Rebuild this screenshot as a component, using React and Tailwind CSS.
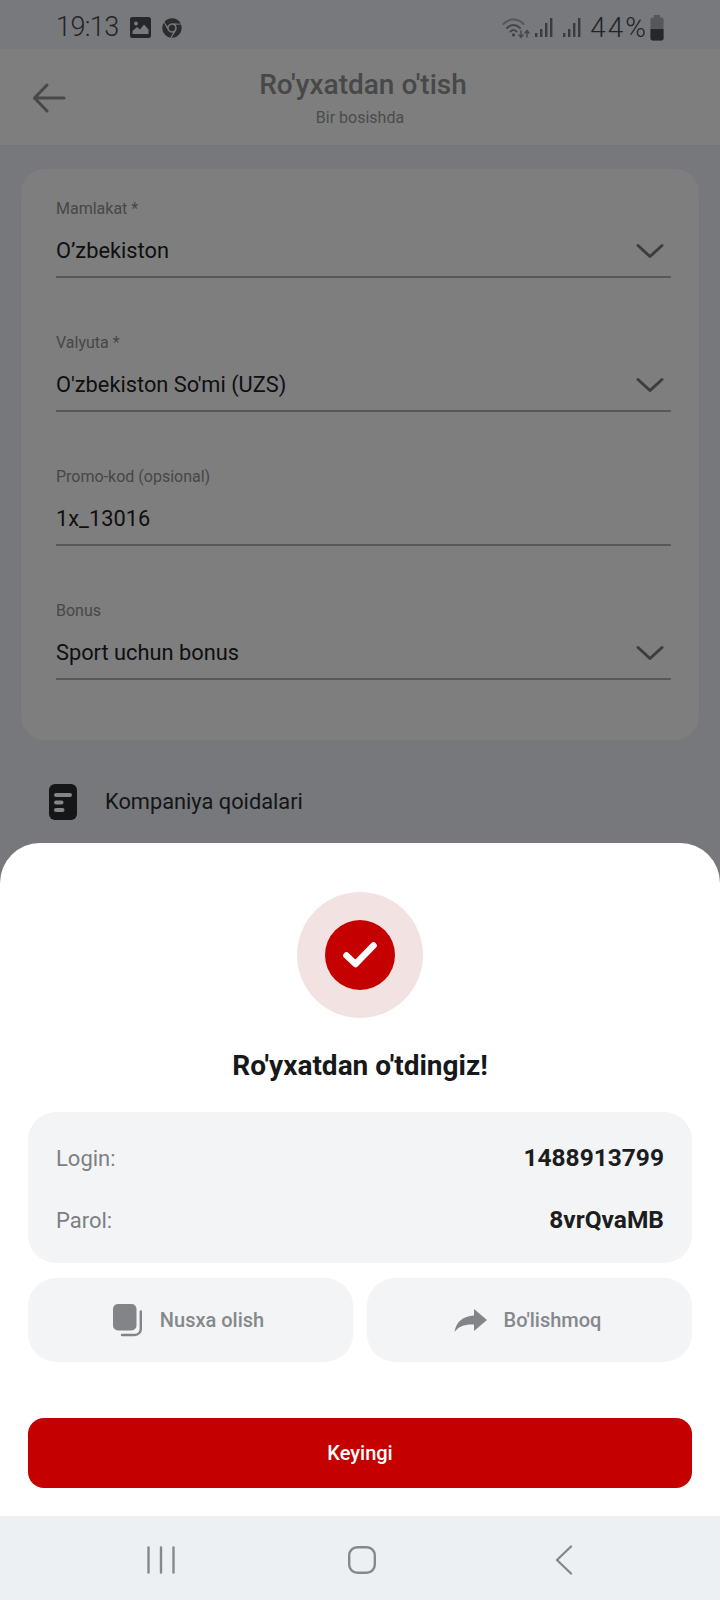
import React from "react";
import { FaChrome } from "react-icons/fa";

function Chevron() {
  return (
    <svg width="28" height="16" viewBox="0 0 28 16" fill="none" stroke="#3d3d3d" strokeWidth="3" strokeLinecap="round" strokeLinejoin="round">
      <path d="M2 2.5 L14 13.5 L26 2.5" />
    </svg>
  );
}

function Field({ label, value, chevron }) {
  return (
    <div className="h-[134px] flex flex-col">
      <div className="mt-[1px] text-[16px] leading-[20px] text-[#464748] h-[20px]">{label}</div>
      <div className="mt-[16px] h-[32px] flex items-center justify-between">
        <span className="text-[21.8px] leading-[32px] text-[#0f0f10]">{value}</span>
        {chevron && <span className="mr-[7px] flex"><Chevron /></span>}
      </div>
      <div className="mt-[9px] h-[2px] bg-[#56585a]" />
    </div>
  );
}

function SignalIcon() {
  return (
    <svg width="20" height="22" viewBox="0 0 20 22" fill="#3a3b3d">
      <rect x="1" y="16" width="2.4" height="4" />
      <rect x="6" y="12" width="2.4" height="8" />
      <rect x="11" y="6" width="2.4" height="14" />
      <rect x="16" y="1" width="2.4" height="19" />
    </svg>
  );
}

export default function App() {
  return (
    <div className="relative w-[720px] h-[1600px] overflow-hidden bg-[#76787b] font-['Roboto',sans-serif]">
      {/* status bar */}
      <div className="h-[49px] bg-[#77797c] flex items-center justify-between pl-[56px] pr-[56px] pt-[6px]">
        <div className="flex items-center">
          <span className="text-[27px] leading-none font-light text-[#232426] tracking-[-0.6px]">19:13</span>
          <svg className="ml-[11px]" width="21" height="21" viewBox="0 0 21 21">
            <rect width="21" height="21" rx="2.5" fill="#26272a" />
            <circle cx="6" cy="6.5" r="2" fill="#77797c" />
            <path d="M2.5 17 L2.5 14 L7 10 L10 12.5 L14 7.5 L18.5 12.5 L18.5 17 Z" fill="#77797c" />
          </svg>
          <FaChrome className="ml-[11px] text-[#2b2c2e]" size={20} />
        </div>
        <div className="flex items-center">
          <svg width="30" height="24" viewBox="0 0 28 24" fill="none" stroke="#44464a" strokeLinecap="round">
            <path d="M1.5 8 C7 2 16 2 21.5 8" strokeWidth="2" stroke="#55575a" />
            <path d="M5 12 C9 8 14 8 18 12" strokeWidth="2" />
            <path d="M8.5 15.5 C10.5 13.5 12.5 13.5 14.5 15.5" strokeWidth="2" />
            <circle cx="11.5" cy="19" r="1.4" fill="#33353a" stroke="none" />
            <path d="M19 15 V21 M17 19 L19 21.5 L21 19" strokeWidth="1.4" />
            <path d="M25 21 V15 M23 17 L25 14.5 L27 17" strokeWidth="1.4" />
          </svg>
          <span className="ml-[3px] flex"><SignalIcon /></span>
          <span className="ml-[8px] flex"><SignalIcon /></span>
          <span className="ml-[8px] text-[28px] leading-none font-light text-[#232426] tracking-[2px]">44%</span>
          <svg className="ml-[2px]" width="14" height="26" viewBox="0 0 14 26">
            <rect x="4" y="0" width="6" height="3" fill="#55575a" />
            <rect x="0.5" y="2.5" width="13" height="23" rx="2" fill="#55575a" />
            <path d="M0.5 14 H13.5 V23.5 A2 2 0 0 1 11.5 25.5 H2.5 A2 2 0 0 1 0.5 23.5 Z" fill="#26272a" />
          </svg>
        </div>
      </div>

      {/* app bar */}
      <div className="relative h-[98px] bg-[#7e7e7e] border-b-2 border-[#747678] flex flex-col items-center">
        <svg className="absolute left-[32px] top-[34px]" width="34" height="30" viewBox="0 0 34 30" fill="none" stroke="#474849" strokeWidth="3" strokeLinecap="round" strokeLinejoin="round">
          <path d="M32 15 H2.5 M15 2 L2.5 15 L15 28" />
        </svg>
        <div className="mt-[18px] pl-[6px] text-[28px] leading-[36px] font-medium text-[#474849]">Ro'yxatdan o'tish</div>
        <div className="mt-[5px] text-[16px] leading-[20px] text-[#4b4c4d]">Bir bosishda</div>
      </div>

      {/* form card */}
      <div className="mt-[22px] ml-[21px] mr-[21px] h-[571px] rounded-[24px] bg-[#7e7e7e] pl-[35px] pr-[28px] pt-[29px]">
        <Field label="Mamlakat *" value="O’zbekiston" chevron />
        <Field label="Valyuta *" value="O'zbekiston So'mi (UZS)" chevron />
        <Field label="Promo-kod (opsional)" value="1x_13016" />
        <Field label="Bonus" value="Sport uchun bonus" chevron />
      </div>

      {/* rules row */}
      <div className="mt-[44px] ml-[49px] flex items-center">
        <svg width="28" height="36" viewBox="0 0 28 36">
          <rect width="28" height="36" rx="6" fill="#151617" />
          <rect x="5" y="9" width="18" height="4" rx="2" fill="#858585" />
          <rect x="5" y="16.5" width="9.5" height="4" rx="2" fill="#858585" />
          <rect x="5" y="24" width="10.5" height="4" rx="2" fill="#858585" />
        </svg>
        <span className="ml-[28px] text-[21.8px] text-[#141516]">Kompaniya qoidalari</span>
      </div>

      {/* bottom sheet */}
      <div className="absolute inset-x-0 bottom-0 h-[757px] flex flex-col">
        <div className="flex-1 bg-white rounded-t-[40px] flex flex-col items-center px-[28px] pt-[49px]">
          <div className="w-[126px] h-[126px] rounded-full bg-[#f3e2e2] flex items-center justify-center">
            <div className="w-[70px] h-[70px] rounded-full bg-[#c40000] flex items-center justify-center">
              <svg width="36" height="28" viewBox="0 0 36 28" fill="none" stroke="#fff" strokeWidth="6.5" strokeLinecap="round" strokeLinejoin="round">
                <path d="M4.5 14.5 L13.5 23 L31.5 4.5" />
              </svg>
            </div>
          </div>
          <div className="mt-[30px] h-[36px] text-[28px] leading-[36px] font-bold text-[#17181a]">Ro'yxatdan o'tdingiz!</div>
          <div className="mt-[28px] w-full h-[151px] rounded-[28px] bg-[#f3f4f6] px-[28px] pt-[15px] flex flex-col">
            <div className="h-[62px] flex items-center justify-between">
              <span className="text-[22px] text-[#7c7f83]">Login:</span>
              <span className="text-[24.5px] font-bold text-[#1c1d20]">1488913799</span>
            </div>
            <div className="h-[62px] flex items-center justify-between">
              <span className="text-[22px] text-[#7c7f83]">Parol:</span>
              <span className="text-[24.5px] font-bold text-[#1c1d20]">8vrQvaMB</span>
            </div>
          </div>
          <div className="mt-[15px] w-full grid grid-cols-2 gap-[14px]">
            <div className="h-[84px] rounded-[28px] bg-[#f3f4f6] flex items-center justify-center pr-[4px]">
              <svg width="30" height="33" viewBox="0 0 30 33" fill="none">
                <rect x="0" y="0" width="23.5" height="26.5" rx="5" fill="#828487" />
                <path d="M27.8 7.5 V25 A6 6 0 0 1 21.8 31 H9" stroke="#828487" strokeWidth="2.4" strokeLinecap="round" />
              </svg>
              <span className="ml-[17px] text-[20px] font-medium text-[#85888c]">Nusxa olish</span>
            </div>
            <div className="h-[84px] rounded-[28px] bg-[#f3f4f6] flex items-center justify-center pr-[4px]">
              <svg width="33" height="23" viewBox="0 0 33 23" fill="#828487">
                <path d="M20 0 L33 11 L20 22 V15.5 C11 15 5 17 0.5 23 C2 13 9 7 20 6.5 Z" />
              </svg>
              <span className="ml-[17px] text-[20px] font-medium text-[#85888c]">Bo'lishmoq</span>
            </div>
          </div>
          <div className="mt-[56px] w-full h-[70px] rounded-[16px] bg-[#c40000] flex items-center justify-center">
            <span className="text-[20px] font-medium text-white">Keyingi</span>
          </div>
        </div>
        {/* nav */}
        <div className="h-[84px] bg-[#edf0f3] flex items-center pl-[147px] pt-[4px]">
          <svg width="28" height="28" viewBox="0 0 28 28" stroke="#85898d" strokeWidth="2.4" strokeLinecap="round">
            <path d="M1.5 1.5 V26.5 M14 1.5 V26.5 M26.5 1.5 V26.5" />
          </svg>
          <svg className="ml-[173px]" width="28" height="28" viewBox="0 0 28 28" fill="none" stroke="#85898d" strokeWidth="2.4">
            <rect x="1.2" y="1.2" width="25.6" height="25.6" rx="8" />
          </svg>
          <svg className="ml-[179px]" width="18" height="30" viewBox="0 0 18 30" fill="none" stroke="#85898d" strokeWidth="2.4" strokeLinecap="round" strokeLinejoin="round">
            <path d="M16 1.5 L2 15 L16 28.5" />
          </svg>
        </div>
      </div>
    </div>
  );
}
